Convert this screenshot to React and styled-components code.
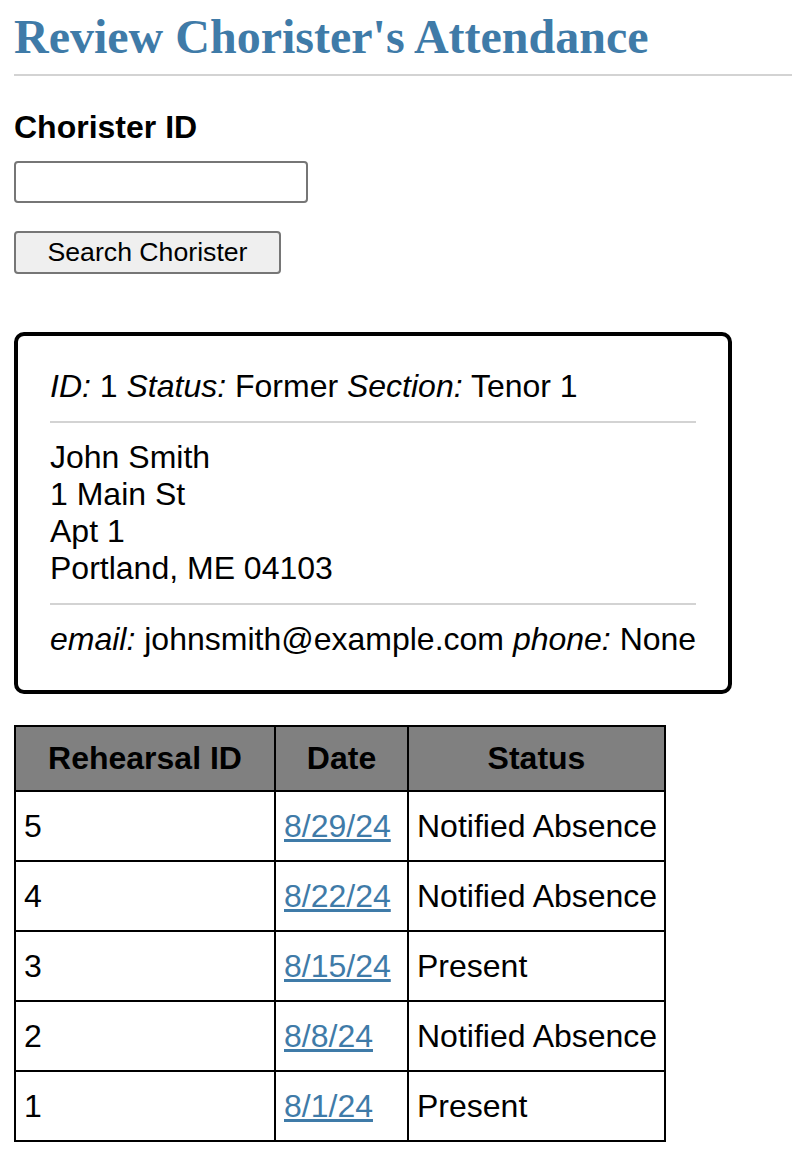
import styled, { createGlobalStyle } from "styled-components"

const Global = createGlobalStyle`
    html, body {
        margin: 0;
        padding: 0;
        background: #fff;
    }
    body {
        font-family: "Liberation Sans", Arial, sans-serif;
        font-size: 32px;
        color: #000;
        overflow-x: hidden;
    }
`

const Page = styled.main`
    padding: 9px 0 40px 14px;
`

const Title = styled.h1`
    margin: 0 0 33px;
    padding-bottom: 10px;
    border-bottom: 2px solid #d3d3d3;
    font-family: "Liberation Serif", "Times New Roman", serif;
    font-size: 48px;
    line-height: 55px;
    font-weight: bold;
    color: #3f7ba8;
`

const SearchForm = styled.form`
    display: flex;
    flex-direction: column;
    align-items: flex-start;
`

const Label = styled.label`
    font-weight: bold;
    font-size: 32px;
    line-height: 37px;
    margin-bottom: 15px;
`

const Input = styled.input`
    box-sizing: border-box;
    width: 294px;
    height: 42px;
    border: 2px solid #767676;
    border-radius: 4px;
    padding: 2px 6px;
    font-family: "Liberation Sans", Arial, sans-serif;
    font-size: 26px;
    margin: 0 0 28px;
`

const Button = styled.button`
    box-sizing: border-box;
    width: 267px;
    height: 43px;
    border: 2px solid #767676;
    border-radius: 4px;
    background: #efefef;
    font-family: "Liberation Sans", Arial, sans-serif;
    font-size: 26.67px;
    color: #000;
    padding: 0;
    margin: 0;
`

const Card = styled.section`
    box-sizing: border-box;
    width: 718px;
    margin: 58px 0 31px;
    border: 4px solid #000;
    border-radius: 10px;
    padding: 32px 32px 32px;
    line-height: 37px;
`

const Line = styled.div`
    white-space: nowrap;
`

const Key = styled.em`
    font-style: italic;
`

const Divider = styled.hr`
    border: 0;
    border-top: 2px solid #d3d3d3;
    margin: 16px 0;
`

const Table = styled.table`
    border-collapse: collapse;
    table-layout: fixed;
    width: 650px;
    line-height: 37px;
`

const Th = styled.th`
    width: ${p => p.$w}px;
    background: #808080;
    border: 2px solid #000;
    padding: 13px 8px;
    font-weight: bold;
    text-align: center;
`

const Td = styled.td`
    border: 2px solid #000;
    padding: 16px 8px 15px;
    text-align: left;
    white-space: nowrap;
`

const DateLink = styled.a`
    color: #3f7ba8;
    text-decoration: underline;
`

const rows = [
    { id: 5, date: "8/29/24", status: "Notified Absence" },
    { id: 4, date: "8/22/24", status: "Notified Absence" },
    { id: 3, date: "8/15/24", status: "Present" },
    { id: 2, date: "8/8/24", status: "Notified Absence" },
    { id: 1, date: "8/1/24", status: "Present" },
]

const App = () => {
    return (
        <Page>
            <Global />
            <Title>Review Chorister's Attendance</Title>

            <SearchForm onSubmit={e => e.preventDefault()}>
                <Label htmlFor="chorister-id">Chorister ID</Label>
                <Input id="chorister-id" type="text" />
                <Button type="submit">Search Chorister</Button>
            </SearchForm>

            <Card>
                <Line>
                    <Key>ID:</Key> 1 <Key>Status:</Key> Former <Key>Section:</Key> Tenor 1
                </Line>
                <Divider />
                <Line>John Smith</Line>
                <Line>1 Main St</Line>
                <Line>Apt 1</Line>
                <Line>Portland, ME 04103</Line>
                <Divider />
                <Line>
                    <Key>email:</Key> johnsmith@example.com <Key>phone:</Key> None
                </Line>
            </Card>

            <Table>
                <thead>
                    <tr>
                        <Th $w={242}>Rehearsal ID</Th>
                        <Th $w={115}>Date</Th>
                        <Th $w={239}>Status</Th>
                    </tr>
                </thead>
                <tbody>
                    {rows.map(r => (
                        <tr key={r.id}>
                            <Td>{r.id}</Td>
                            <Td><DateLink href="#">{r.date}</DateLink></Td>
                            <Td>{r.status}</Td>
                        </tr>
                    ))}
                </tbody>
            </Table>
        </Page>
    )
}

export default App
